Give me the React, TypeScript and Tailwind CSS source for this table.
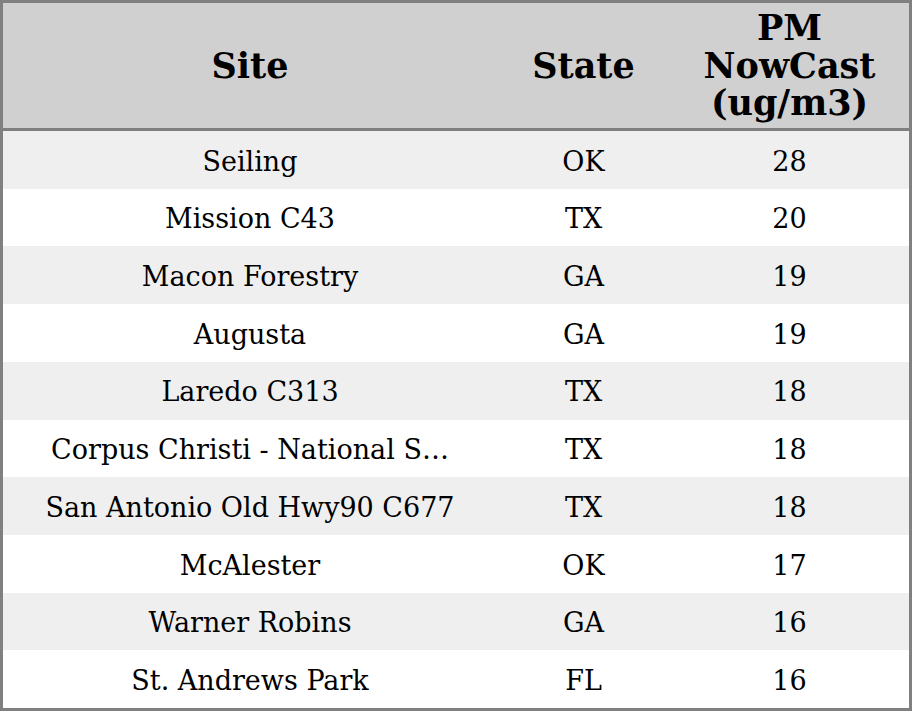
import React from "react";

const rows: [string, string, string][] = [
  ["Seiling", "OK", "28"],
  ["Mission C43", "TX", "20"],
  ["Macon Forestry", "GA", "19"],
  ["Augusta", "GA", "19"],
  ["Laredo C313", "TX", "18"],
  ["Corpus Christi - National S\u2026", "TX", "18"],
  ["San Antonio Old Hwy90 C677", "TX", "18"],
  ["McAlester", "OK", "17"],
  ["Warner Robins", "GA", "16"],
  ["St. Andrews Park", "FL", "16"],
];

export default function App() {
  return (
    <div
      className="w-[912px] h-[711px] border-[3px] border-[#808080] bg-white flex flex-col text-black"
      style={{ fontFamily: '"DejaVu Serif", serif' }}
    >
      <div className="h-[128px] shrink-0 bg-[#d0d0d0] border-b-[3px] border-[#808080] grid grid-cols-[494px_173px_1fr] items-center text-center font-bold text-[35px] leading-[37.5px]">
        <div>Site</div>
        <div>State</div>
        <div>
          PM
          <br />
          NowCast
          <br />
          (ug/m3)
        </div>
      </div>
      <div className="flex-1 flex flex-col">
        {rows.map((r, i) => (
          <div
            key={i}
            className={`flex-1 grid grid-cols-[494px_173px_1fr] items-center text-center text-[27px] pt-[4px] ${
              i % 2 === 0 ? "bg-[#efefef]" : "bg-white"
            }`}
          >
            <div>{r[0]}</div>
            <div>{r[1]}</div>
            <div>{r[2]}</div>
          </div>
        ))}
      </div>
    </div>
  );
}
